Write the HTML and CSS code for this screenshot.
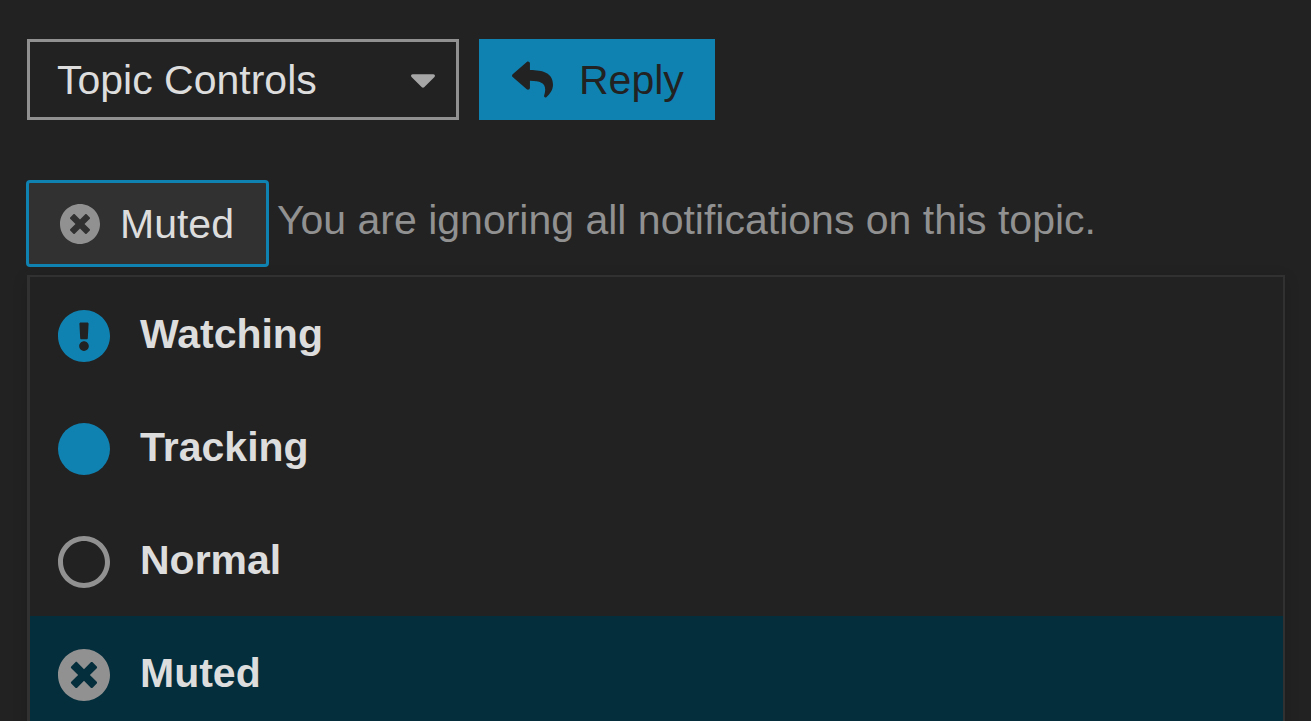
FILE: index.html
```html
<!DOCTYPE html>
<html lang="en">
<head>
<meta charset="utf-8">
<meta name="viewport" content="width=device-width, initial-scale=1">
<title>Topic notifications</title>
<link rel="stylesheet" href="styles.css">
</head>
<body>
<main class="topic-footer">
  <div class="controls">
    <div class="topic-select">
      <select class="topic-select-input" aria-label="Topic Controls">
        <option>Topic Controls</option>
      </select>
      <svg class="caret" viewBox="11 192 298 169" aria-hidden="true"><path d="M31.3 192h257.3c17.8 0 26.7 21.5 14.1 34.1L174.1 354.7c-7.8 7.8-20.5 7.8-28.3 0L17.2 226.1C4.6 213.5 13.5 192 31.3 192z"/></svg>
    </div>
    <button class="reply" type="button">
      <svg class="reply-icon" viewBox="0 0 512 512" aria-hidden="true"><path d="M8.309 189.836L184.313 37.851C199.719 24.546 224 35.347 224 56.015v80.053c160.629 1.839 288 34.032 288 186.258 0 61.441-39.581 122.309-83.333 154.132-13.653 9.931-33.111-2.533-28.077-18.631 45.344-145.012-21.507-183.51-176.59-185.742V360c0 20.7-24.3 31.453-39.687 18.164l-176.004-152c-11.071-9.562-11.086-26.753 0-36.328z"/></svg>
      <span>Reply</span>
    </button>
  </div>

  <div class="notifications">
    <button class="level-toggle" type="button" aria-haspopup="true" aria-expanded="true" aria-describedby="level-text">
      <svg class="level-icon" viewBox="8 8 496 496" aria-hidden="true"><path d="M256 8C119 8 8 119 8 256s111 248 248 248 248-111 248-248S393 8 256 8zm121.600 313.100c4.700 4.700 4.700 12.300 0 17L338 377.600c-4.700 4.700-12.300 4.700-17 0L256 312l-65.100 65.600c-4.700 4.700-12.300 4.700-17 0L134.400 338c-4.700-4.700-4.700-12.300 0-17l65.600-65-65.600-65.100c-4.700-4.700-4.700-12.300 0-17l39.600-39.600c4.700-4.700 12.300-4.700 17 0l65 65.700 65.100-65.600c4.700-4.700 12.300-4.700 17 0l39.600 39.600c4.700 4.700 4.700 12.300 0 17L312 256l65.600 65.100z"/></svg>
      <span>Muted</span>
    </button>
    <p class="level-text" id="level-text">You are ignoring all notifications on this topic.</p>
  </div>

  <ul class="levels">
    <li><button class="level" type="button">
      <svg class="level-badge accent" viewBox="8 8 496 496" aria-hidden="true"><path d="M504 256c0 136.997-111.043 248-248 248S8 392.997 8 256C8 119.083 119.043 8 256 8s248 111.083 248 248zm-248 50c-25.405 0-46 20.595-46 46s20.595 46 46 46 46-20.595 46-46-20.595-46-46-46zm-43.673-165.346l7.418 136c.347 6.364 5.609 11.346 11.982 11.346h48.546c6.373 0 11.635-4.982 11.982-11.346l7.418-136c.375-6.874-5.098-12.654-11.982-12.654h-63.383c-6.884 0-12.356 5.780-11.981 12.654z"/></svg>
      <span>Watching</span>
    </button></li>
    <li><button class="level" type="button">
      <svg class="level-badge accent" viewBox="8 8 496 496" aria-hidden="true"><circle cx="256" cy="256" r="248"/></svg>
      <span>Tracking</span>
    </button></li>
    <li><button class="level" type="button">
      <svg class="level-badge" viewBox="8 8 496 496" aria-hidden="true"><path d="M256 8C119 8 8 119 8 256s111 248 248 248 248-111 248-248S393 8 256 8zm0 448c-110.500 0-200-89.500-200-200S145.500 56 256 56s200 89.500 200 200-89.500 200-200 200z"/></svg>
      <span>Normal</span>
    </button></li>
    <li><button class="level selected" type="button" aria-current="true">
      <svg class="level-badge" viewBox="8 8 496 496" aria-hidden="true"><path d="M256 8C119 8 8 119 8 256s111 248 248 248 248-111 248-248S393 8 256 8zm121.600 313.100c4.700 4.700 4.700 12.300 0 17L338 377.600c-4.700 4.700-12.300 4.700-17 0L256 312l-65.100 65.600c-4.700 4.700-12.300 4.700-17 0L134.400 338c-4.700-4.700-4.700-12.300 0-17l65.600-65-65.600-65.100c-4.700-4.700-4.700-12.300 0-17l39.600-39.600c4.700-4.700 12.300-4.700 17 0l65 65.700 65.100-65.600c4.700-4.700 12.300-4.700 17 0l39.600 39.600c4.700 4.700 4.700 12.300 0 17L312 256l65.600 65.100z"/></svg>
      <span>Muted</span>
    </button></li>
  </ul>
</main>
</body>
</html>
```
FILE: styles.css
```css
* {
  box-sizing: border-box;
}

body {
  margin: 0;
  height: 100vh;
  overflow: hidden;
  background: #222;
  color: #ddd;
  font: 41px/48px "Liberation Sans", Arial, sans-serif;
}

button,
select {
  margin: 0;
  border: 0;
  border-radius: 0;
  background: none;
  color: inherit;
  font: inherit;
  text-align: left;
}

svg {
  display: block;
  flex: none;
  fill: #919191;
}

.topic-footer {
  padding: 39px 26px 0;
}

.controls {
  display: flex;
  gap: 20px;
  padding-left: 1px;
}

.topic-select {
  display: grid;
  align-items: center;
  width: 432px;
}

.topic-select-input {
  grid-area: 1 / 1;
  width: 100%;
  height: 81px;
  padding: 0 60px 0 27px;
  border: 3px solid #919191;
  appearance: none;
}

.caret {
  grid-area: 1 / 1;
  justify-self: end;
  width: 24px;
  height: 14px;
  margin: 2px 24px 0 0;
  fill: #a6a6a6;
  pointer-events: none;
}

.reply {
  display: flex;
  align-items: center;
  gap: 26px;
  padding: 0 31px 0 33px;
  background: #1082b1;
  color: #222;
}

.reply-icon {
  width: 41px;
  height: 41px;
  fill: #222;
}

.notifications {
  display: flex;
  align-items: center;
  gap: 8px;
  margin-top: 60px;
}

.level-toggle {
  display: flex;
  align-items: center;
  gap: 20px;
  height: 87px;
  padding: 0 32px 0 31px;
  border: 3px solid #1082b1;
  border-radius: 4px;
  background: #313131;
}

.level-icon {
  width: 40px;
  height: 40px;
}

.level-text {
  margin: 0;
  padding-bottom: 8px;
  color: #919191;
}

.levels {
  margin: 8px 0 0 1px;
  padding: 0;
  border: 2px solid #313131;
  border-left-width: 3px;
  box-shadow: 0 4px 14px rgba(0, 0, 0, 0.15);
  list-style: none;
}

.level {
  display: flex;
  align-items: center;
  gap: 30px;
  width: 100%;
  height: 113px;
  padding: 5px 28px 0;
  font-weight: 700;
}

.level span {
  padding-bottom: 4px;
}

.level.selected {
  background: #042e3c;
}

.level-badge {
  width: 52px;
  height: 52px;
}

.level-badge.accent {
  fill: #1082b1;
}
```
